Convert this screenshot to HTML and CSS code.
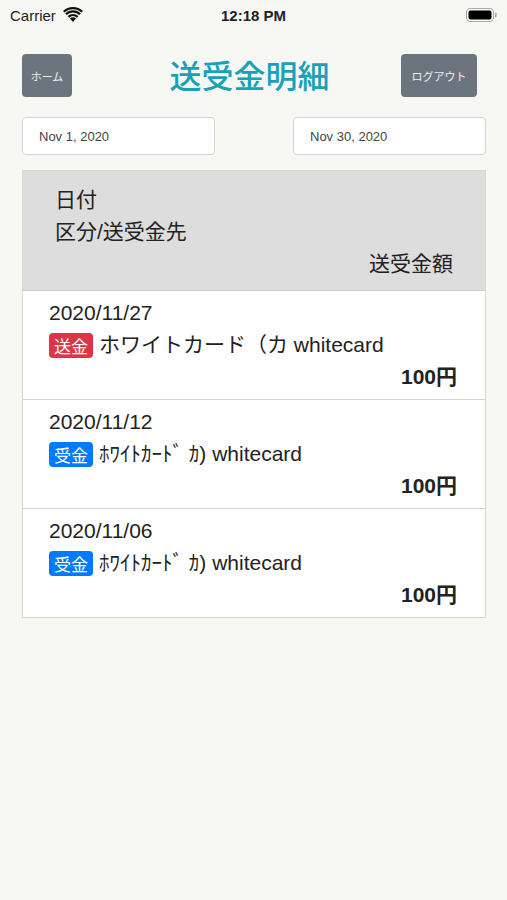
FILE: index.html
```html
<!DOCTYPE html>
<html lang="ja">
<head>
<meta charset="utf-8">
<title>送受金明細</title>
<link rel="stylesheet" href="styles.css">
</head>
<body>
<div class="status">
  <div class="status-left">
    <span class="carrier">Carrier</span>
    <svg class="wifi" width="20" height="15" viewBox="0 0 20 15">
      <path d="M10 15 L6.9 11.6 A4.6 4.6 0 0 1 13.1 11.6 Z" fill="#111"/>
      <path d="M4.6 9.1 A7.8 7.8 0 0 1 15.4 9.1 L13.9 10.7 A5.6 5.6 0 0 0 6.1 10.7 Z" fill="#111"/>
      <path d="M2.2 6.5 A11.2 11.2 0 0 1 17.8 6.5 L16.3 8.1 A9 9 0 0 0 3.7 8.1 Z" fill="#111"/>
      <path d="M0 4 A14.5 14.5 0 0 1 20 4 L18.5 5.6 A12.3 12.3 0 0 0 1.5 5.6 Z" fill="#111"/>
    </svg>
  </div>
  <div class="time">12:18 PM</div>
  <div class="status-right">
    <svg class="battery" width="31" height="14" viewBox="0 0 31 14">
      <rect x="0.5" y="0.5" width="27" height="13" rx="3.5" fill="none" stroke="#aaa"/>
      <rect x="2.5" y="2.5" width="23" height="9" rx="2" fill="#000"/>
      <rect x="29" y="4.5" width="1.6" height="5" rx="0.8" fill="#aaa"/>
    </svg>
  </div>
</div>

<div class="topbar">
  <div class="left"><button class="btn btn-home">ホーム</button></div>
  <h1 class="title">送受金明細</h1>
  <div class="right"><button class="btn btn-logout">ログアウト</button></div>
</div>

<div class="dates">
  <div class="date-input">Nov 1, 2020</div>
  <div class="date-input">Nov 30, 2020</div>
</div>

<div class="table">
  <div class="thead">
    <div class="line">日付</div>
    <div class="line">区分/送受金先</div>
    <div class="line amount-h">送受金額</div>
  </div>
  <div class="row">
    <div class="line">2020/11/27</div>
    <div class="line name"><span class="badge send">送金</span><span>ホワイトカード（カ whitecard</span></div>
    <div class="line amount">100円</div>
  </div>
  <div class="row">
    <div class="line">2020/11/12</div>
    <div class="line name"><span class="badge recv">受金</span><span>ﾎﾜｲﾄｶｰﾄﾞ ｶ) whitecard</span></div>
    <div class="line amount">100円</div>
  </div>
  <div class="row">
    <div class="line">2020/11/06</div>
    <div class="line name"><span class="badge recv">受金</span><span>ﾎﾜｲﾄｶｰﾄﾞ ｶ) whitecard</span></div>
    <div class="line amount">100円</div>
  </div>
</div>
</body>
</html>
```

FILE: styles.css
```css
* { box-sizing: border-box; }
body {
  margin: 0;
  background: #f7f8f4;
  font-family: "Liberation Sans", "Noto Sans CJK JP", sans-serif;
  color: #222;
}
.status {
  height: 30px;
  display: grid;
  grid-template-columns: 1fr auto 1fr;
  align-items: center;
  padding: 0 10px 0 10px;
}
.status-left { display: flex; align-items: center; gap: 7px; }
.carrier { font-size: 15px; color: #222; }
.wifi { margin-top: -1px; }
.time { font-size: 15px; font-weight: bold; color: #222; }
.status-right { display: flex; justify-content: flex-end; padding-right: 0; }

.topbar {
  margin-top: 24px;
  height: 43px;
  padding: 0 30px 0 22px;
  display: grid;
  grid-template-columns: 1fr auto 1fr;
  align-items: center;
}
.topbar .right { display: flex; justify-content: flex-end; }
.btn {
  height: 43px;
  border: none;
  border-radius: 4px;
  background: #6c757d;
  color: #eceff1;
  font-family: "Noto Sans CJK JP", sans-serif;
  font-size: 11px;
  padding: 0;
  margin: 0;
}
.btn-home { width: 50px; }
.btn-logout { width: 76px; }
.title {
  margin: 0 0 3px 0;
  font-family: "Noto Sans CJK JP", sans-serif;
  font-weight: 500;
  font-size: 32px;
  color: #17a2b8;
  line-height: 40px;
  letter-spacing: 0;
}

.dates {
  margin-top: 20px;
  padding: 0 21px 0 22px;
  display: flex;
  justify-content: space-between;
}
.date-input {
  width: 193px;
  height: 38px;
  background: #fff;
  border: 1px solid #d2d4d6;
  border-radius: 4px;
  padding-left: 16px;
  font-size: 13px;
  color: #444;
  display: flex;
  align-items: center;
}

.table {
  margin: 15px 21px 0 22px;
  border: 1px solid #d6d6d6;
  background: #fff;
}
.thead {
  background: #dddddd;
  padding: 13px 32px 10px 32px;
  border-bottom: 1px solid #d0d0d0;
}
.line {
  font-size: 21px;
  line-height: 32px;
  height: 32px;
  color: #222;
}
.amount-h { text-align: right; }
.row {
  padding: 6px 28px 6px 26px;
  border-bottom: 1px solid #d6d6d6;
}
.row:last-child { border-bottom: none; }
.name { display: flex; align-items: center; gap: 6px; white-space: nowrap; }
.badge {
  display: inline-flex;
  align-items: center;
  height: 25px;
  padding: 0 5px;
  border-radius: 4px;
  color: #fff;
  font-family: "Noto Sans CJK JP", sans-serif;
  font-size: 17px;
  line-height: 25px;
}
.badge.send { background: #dc3545; }
.badge.recv { background: #007bff; }
.amount { text-align: right; font-weight: bold; }
```
